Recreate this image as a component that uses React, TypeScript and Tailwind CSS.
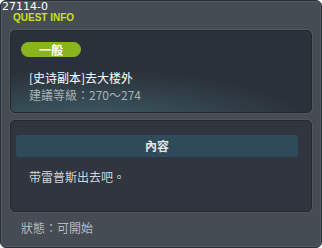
import React from 'react';

const cjk = { fontFamily: '"Noto Sans CJK TC", "Noto Sans CJK SC", sans-serif' };

const QuestInfo: React.FC = () => {
  return (
    <div className="w-[322px] h-[248px] bg-[#454c54] rounded-[6px] border border-[#2a2f35] shadow-[inset_0_0_0_1px_#545b63] flex flex-col overflow-hidden" style={cjk}>
      {/* Header */}
      <div className="h-[29px] pl-[1px] flex flex-col">
        <div className="text-[11px] leading-[11px] text-white" style={{ fontFamily: '"DejaVu Sans", sans-serif' }}>27114-0</div>
        <div className="pl-[11px] text-[10px] leading-[11px] font-bold text-[#cbe01c]" style={{ fontFamily: '"Liberation Sans", sans-serif' }}>QUEST INFO</div>
      </div>

      {/* Quest summary */}
      <div className="mx-[9px] h-[83px] rounded-[5px] border border-[#23272e] shadow-[0_0_0_1px_#50575f] bg-[radial-gradient(ellipse_90%_85%_at_25%_120%,#42626f_0%,#34474f_45%,#2b313b_85%)] pl-[10px] pt-[11px] flex flex-col">
        <div className="w-[60px] h-[15px] rounded-full bg-[#8ab41e] text-white text-[12px] leading-[15px] font-bold flex items-center justify-center">一般</div>
        <div className="pl-[8px] mt-[13px] text-[12px] leading-[16px] text-white">[史诗副本]去大楼外</div>
        <div className="pl-[8px] mt-[2px] text-[12px] leading-[14px] text-[#a7b2b8]">建議等級：270～274</div>
      </div>

      {/* Content */}
      <div className="mx-[9px] mt-[7px] h-[92px] rounded-[5px] border border-[#23272e] shadow-[0_0_0_1px_#50575f] bg-[#30353f] pl-[5px] pr-[13px] pt-[14px] flex flex-col">
        <div className="h-[22px] rounded-[3px] bg-[#2f4b59] text-[#e2e8ea] text-[12px] font-bold flex items-center justify-center">內容</div>
        <div className="pl-[13px] mt-[12px] text-[12px] leading-[16px] text-[#d2d6d8]">带雷普斯出去吧。</div>
      </div>

      {/* Status */}
      <div className="pl-[20px] mt-[8px] text-[12px] leading-[16px] text-[#b3bbbf]">狀態：可開始</div>
    </div>
  );
};

export default function App() {
  return <QuestInfo />;
}
